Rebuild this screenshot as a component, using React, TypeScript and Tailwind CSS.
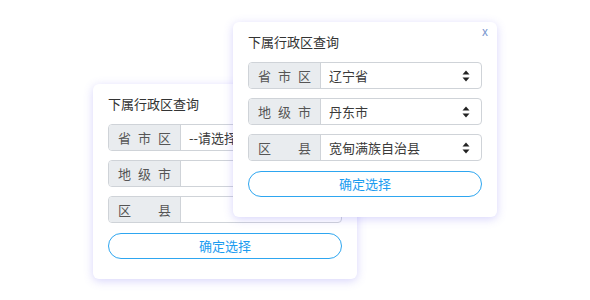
const FONT = "font-['Microsoft_YaHei','Noto_Sans_CJK_SC',sans-serif]";

type Row = { label: string[]; value: string; arrow: boolean };

function Arrow() {
  return (
    <svg width="8" height="12" viewBox="0 0 8 12" className="shrink-0">
      <path d="M4 0.5 L7.5 4.5 L0.5 4.5 Z" fill="#222" />
      <path d="M4 11.5 L7.5 7.5 L0.5 7.5 Z" fill="#222" />
    </svg>
  );
}

function Card({ rows, close, className }: { rows: Row[]; close?: boolean; className: string }) {
  return (
    <div
      className={`absolute w-[264px] rounded-[6px] bg-white px-[15px] pt-[13px] pb-[20px] shadow-[0_2px_10px_rgba(110,100,240,0.28)] ${className}`}
    >
      {close && (
        <span className="absolute right-[9px] top-[0px] text-[12px] text-[#7b97cf]">x</span>
      )}
      <div className="h-[14px] text-[13px] leading-[14px] text-[#333]">下属行政区查询</div>
      <div className="mt-[13px] flex flex-col gap-[9px]">
        {rows.map((r, i) => (
          <div
            key={i}
            className="flex h-[27px] w-[234px] overflow-hidden rounded-[4px] border border-[#cfd3d8]"
          >
            <div className="flex w-[72px] shrink-0 items-center justify-between border-r border-[#cfd3d8] bg-[#e9ecef] px-[9px] text-[13px] text-[#555]">
              {r.label.map((c, j) => (
                <span key={j}>{c}</span>
              ))}
            </div>
            <div className="flex flex-1 items-center justify-between pl-[8px] pr-[11px] text-[13px] text-[#3a3a3a]">
              <span>{r.value}</span>
              {r.arrow && <Arrow />}
            </div>
          </div>
        ))}
      </div>
      <div className="mt-[10px] flex h-[26px] w-[234px] items-center justify-center rounded-full border border-[#2ea6f0] text-[13px] text-[#1b9cf0]">
        确定选择
      </div>
    </div>
  );
}

export default function App() {
  return (
    <div className={`relative h-[300px] w-[590px] overflow-hidden bg-white ${FONT}`}>
      <Card
        className="left-[93px] top-[84px] h-[195px]"
        rows={[
          { label: ["省", "市", "区"], value: "--请选择", arrow: false },
          { label: ["地", "级", "市"], value: "", arrow: false },
          { label: ["区", "县"], value: "", arrow: false },
        ]}
      />
      <Card
        className="left-[233px] top-[22px] h-[195px]"
        close
        rows={[
          { label: ["省", "市", "区"], value: "辽宁省", arrow: true },
          { label: ["地", "级", "市"], value: "丹东市", arrow: true },
          { label: ["区", "县"], value: "宽甸满族自治县", arrow: true },
        ]}
      />
    </div>
  );
}
